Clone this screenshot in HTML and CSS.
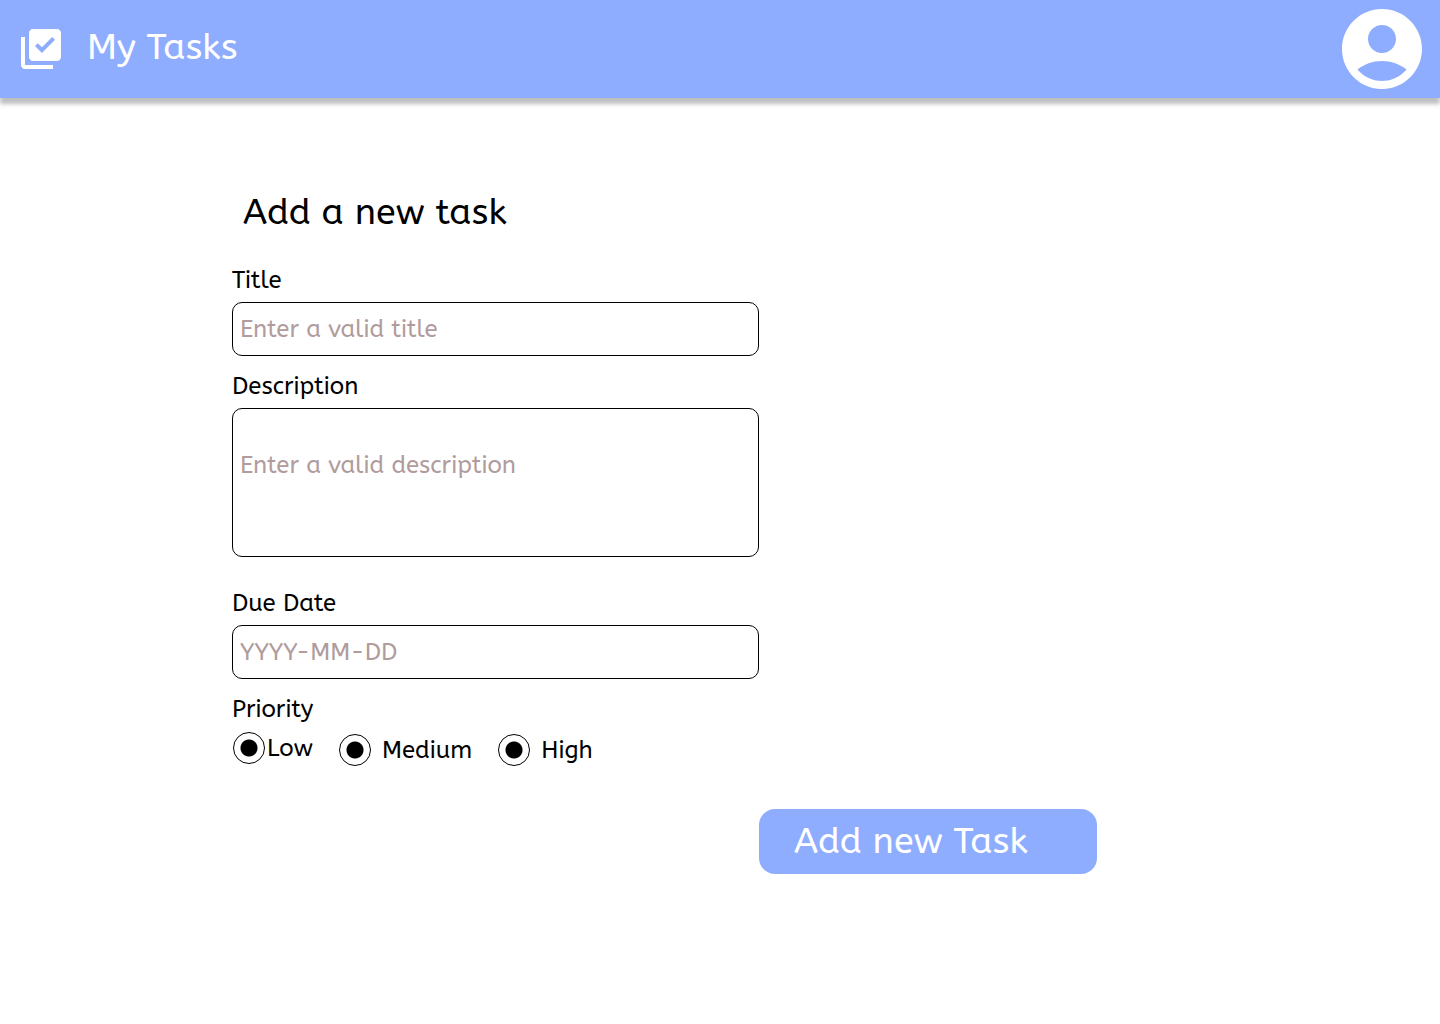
FILE: index.html
```html
<!DOCTYPE html>
<html lang="en">
<head>
  <meta charset="utf-8">
  <meta name="viewport" content="width=device-width, initial-scale=1">
  <title>My Tasks</title>
  <link rel="stylesheet" href="styles.css">
</head>
<body>
  <header class="topbar">
    <a class="brand" href="#">
      <svg class="brand-icon" viewBox="0 0 24 24" aria-hidden="true"><path d="M20 2H8c-1.1 0-2 .9-2 2v12c0 1.1.9 2 2 2h12c1.1 0 2-.9 2-2V4c0-1.1-.9-2-2-2zm-7.53 12L9 10.5l1.4-1.41 2.07 2.08L17.6 6 19 7.41 12.47 14zM4 20h14v2H4c-1.1 0-2-.9-2-2V6h2v14z"/></svg>
      <span class="brand-name">My Tasks</span>
    </a>
    <button class="account" type="button" aria-label="Account">
      <svg class="account-icon" viewBox="0 0 24 24" aria-hidden="true"><path d="M12 2C6.48 2 2 6.48 2 12s4.48 10 10 10 10-4.48 10-10S17.52 2 12 2zm0 4c1.93 0 3.5 1.57 3.5 3.5S13.93 13 12 13s-3.5-1.57-3.5-3.5S10.07 6 12 6zm0 14c-2.03 0-4.43-.82-6.14-2.88C7.55 15.8 9.68 15 12 15s4.45.8 6.14 2.12C16.43 19.18 14.03 20 12 20z"/></svg>
    </button>
  </header>
  <main class="page">
    <form class="task-form">
      <h1 class="form-title">Add a new task</h1>
      <div class="field">
        <label for="title">Title</label>
        <input class="control" id="title" type="text" placeholder="Enter a valid title">
      </div>
      <div class="field">
        <label for="description">Description</label>
        <textarea class="control control-large" id="description" placeholder="Enter a valid description"></textarea>
      </div>
      <div class="field field-spaced">
        <label for="due">Due Date</label>
        <input class="control" id="due" type="text" placeholder="YYYY-MM-DD">
      </div>
      <fieldset class="priority">
        <legend>Priority</legend>
        <div class="options">
          <label class="option option-tight"><input class="radio" type="radio" name="priority" value="low">Low</label>
          <label class="option"><input class="radio" type="radio" name="priority" value="medium">Medium</label>
          <label class="option"><input class="radio" type="radio" name="priority" value="high">High</label>
        </div>
      </fieldset>
      <button class="submit" type="submit">Add new Task</button>
    </form>
  </main>
</body>
</html>
```

FILE: styles.css
```css
* {
  box-sizing: border-box;
}

body {
  margin: 0;
  background: #fff;
  color: #000;
  font-family: "ABeeZee", "Noto Sans", sans-serif;
  font-size: 24px;
  line-height: 28px;
}

.topbar {
  display: flex;
  align-items: center;
  justify-content: space-between;
  padding: 1px 10px 1px 17px;
  background: #8fadff;
  box-shadow: 0 6px 4px rgba(0, 0, 0, 0.25);
}

.brand {
  display: flex;
  align-items: center;
  gap: 22px;
  color: #fff;
  font-size: 36px;
  line-height: 44px;
  text-decoration: none;
}

.brand-icon {
  width: 48px;
  height: 48px;
  fill: currentColor;
}

.brand-name {
  padding-bottom: 4px;
}

.account {
  padding: 0;
  border: 0;
  background: none;
  color: #fff;
}

.account-icon {
  display: block;
  width: 96px;
  height: 96px;
  fill: currentColor;
}

.page {
  padding: 92px 16px 92px 232px;
}

.task-form {
  display: flex;
  flex-direction: column;
  gap: 16px;
  max-width: 865px;
}

.form-title {
  margin: 0 0 16px;
  padding-left: 11px;
  font-size: 36px;
  font-weight: 400;
  line-height: 44px;
}

.field {
  display: flex;
  flex-direction: column;
  gap: 8px;
  max-width: 527px;
}

.field-spaced {
  margin-top: 16px;
}

.control {
  width: 100%;
  height: 54px;
  padding: 0 7px;
  border: 1px solid #000;
  border-radius: 10px;
  background: #fff;
  color: #000;
  font: inherit;
}

.control::placeholder {
  color: #b09c9c;
  opacity: 1;
}

.control-large {
  display: block;
  height: 149px;
  padding: 42px 7px;
  resize: none;
}

.priority {
  min-width: 0;
  margin: 0;
  padding: 0;
  border: 0;
}

.priority legend {
  padding: 0;
}

.options {
  display: flex;
  flex-wrap: wrap;
  align-items: flex-end;
  gap: 26px;
  margin-top: 9px;
}

.option {
  display: flex;
  align-items: center;
  gap: 11px;
}

.option-tight {
  gap: 2px;
  padding: 0 0 2px 1px;
}

.radio {
  appearance: none;
  width: 32px;
  height: 32px;
  margin: 0;
  border: 1px solid #000;
  border-radius: 50%;
  background: radial-gradient(circle, #000 0 8px, #fff 9px);
}

.submit {
  align-self: flex-end;
  width: 338px;
  max-width: 100%;
  margin-top: 27px;
  padding: 10px 35px 11px;
  border: 0;
  border-radius: 16px;
  background: #8fadff;
  color: #fff;
  font: inherit;
  font-size: 36px;
  line-height: 44px;
  text-align: left;
}
```
